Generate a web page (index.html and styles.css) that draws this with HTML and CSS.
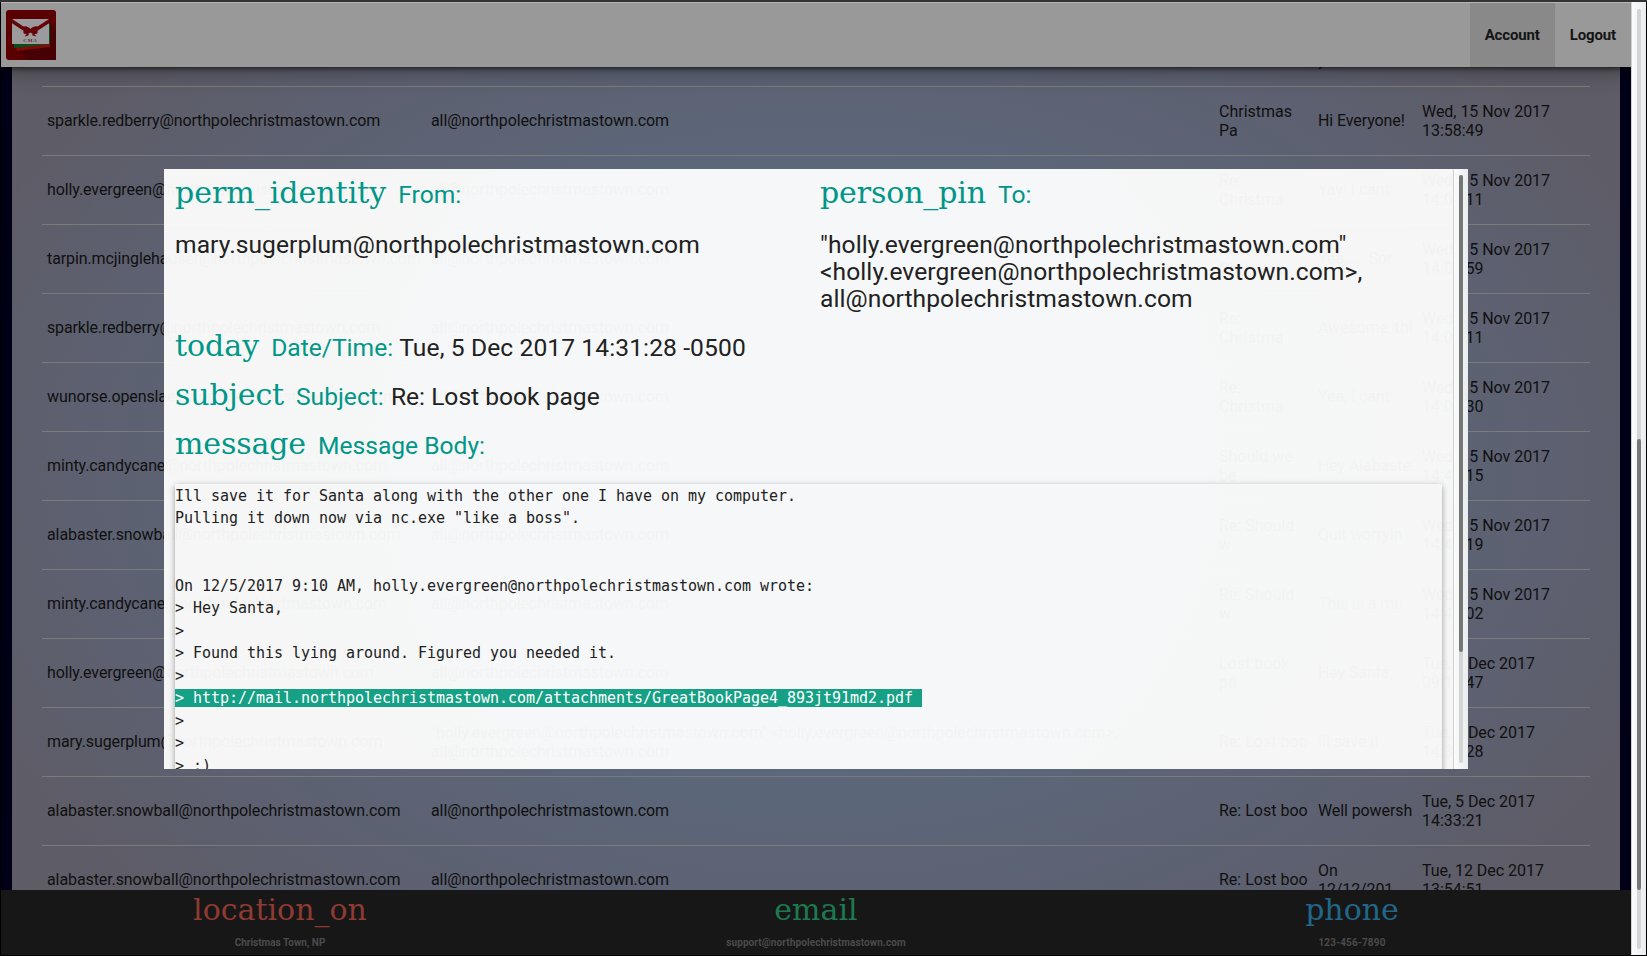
FILE: index.html
```html
<!DOCTYPE html>
<html lang="en">
<head>
<meta charset="utf-8">
<title>Mail</title>
<link rel="stylesheet" href="styles.css">
</head>
<body>
<div class="window">
  <div class="page">
    <header class="nav">
      <svg class="logo" width="50" height="50" viewBox="0 0 50 50">
        <defs><clipPath id="env"><path d="M6 9H43V34H6z"/></clipPath></defs>
        <rect width="50" height="50" rx="3" fill="#5a0003"/>
        <path d="M6 34L43 12L50 20V50H22z" fill="#470003"/>
        <path d="M8 33L44 31V37L11 41z" fill="#7d0c0a"/>
        <path d="M8 30L44 14V34L8 38z" fill="#07501c"/>
        <rect x="6" y="9" width="37" height="25" fill="#9b9a9c"/>
        <g clip-path="url(#env)"><path d="M5 10.500L18 19M44 10.500L31 19" stroke="#650408" stroke-width="3.400"/></g>
        <path d="M24.500 19C22 16 18 15.500 17 17L17.500 23C19 25 22 24 24.500 22.500C27 24 30 25 31.500 23L32 17C31 15.500 27 16 24.500 19zM23 21.500L18.500 26.500L22.500 25.500zM26 21.500L26.500 25.500L30.500 26.500z" fill="#650408"/>
        <text class="logo-text" x="24.500" y="31.500" text-anchor="middle">CMA</text>
      </svg>
      <nav class="links"><a class="link active">Account</a><a class="link">Logout</a></nav>
    </header>
    <main class="content">
      <div class="panel">
        <table class="mails">
          <colgroup><col class="c-from"><col class="c-to"><col class="c-subj"><col class="c-body"><col class="c-date"></colgroup>
          <tbody>
            <tr><td></td><td></td><td></td><td>Hi<br>you</td><td></td></tr>
            <tr><td class="tight">sparkle.redberry@northpolechristmastown.com</td><td>all@northpolechristmastown.com</td><td>Christmas Pa</td><td>Hi Everyone!</td><td>Wed, 15 Nov 2017 13:58:49</td></tr>
            <tr><td>holly.evergreen@northpolechristmastown.com</td><td>all@northpolechristmastown.com</td><td>Re:<br>Christma</td><td>Yay! I cant</td><td>Wed, 15 Nov 2017 14:00:11</td></tr>
            <tr><td>tarpin.mcjinglehauser@northpolechristmastown.com</td><td>all@northpolechristmastown.com</td><td>Re:<br>Christma</td><td>Yea..... Sor</td><td>Wed, 15 Nov 2017 14:00:59</td></tr>
            <tr><td class="tight">sparkle.redberry@northpolechristmastown.com</td><td>all@northpolechristmastown.com</td><td>Re:<br>Christma</td><td>Awesome, thi</td><td>Wed, 15 Nov 2017 14:02:11</td></tr>
            <tr><td>wunorse.openslae@northpolechristmastown.com</td><td>all@northpolechristmastown.com</td><td>Re:<br>Christma</td><td>Yea, I cant</td><td>Wed, 15 Nov 2017 14:04:30</td></tr>
            <tr><td>minty.candycane@northpolechristmastown.com</td><td>all@northpolechristmastown.com</td><td>Should we be</td><td>Hey Alabaste</td><td>Wed, 15 Nov 2017 14:45:15</td></tr>
            <tr><td>alabaster.snowball@northpolechristmastown.com</td><td>all@northpolechristmastown.com</td><td>Re: Should w</td><td>Quit worryin</td><td>Wed, 15 Nov 2017 14:48:19</td></tr>
            <tr><td>minty.candycane@northpolechristmastown.com</td><td>all@northpolechristmastown.com</td><td>Re: Should w</td><td>This is a mu</td><td>Wed, 15 Nov 2017 14:49:02</td></tr>
            <tr><td>holly.evergreen@northpolechristmastown.com</td><td>all@northpolechristmastown.com</td><td>Lost book pa</td><td>Hey Santa,</td><td>Tue, 5 Dec 2017 09:10:47</td></tr>
            <tr><td>mary.sugerplum@northpolechristmastown.com</td><td>"holly.evergreen@northpolechristmastown.com" &lt;holly.evergreen@northpolechristmastown.com&gt;, all@northpolechristmastown.com</td><td>Re: Lost boo</td><td>Ill save it</td><td>Tue, 5 Dec 2017 14:31:28</td></tr>
            <tr><td>alabaster.snowball@northpolechristmastown.com</td><td>all@northpolechristmastown.com</td><td>Re: Lost boo</td><td>Well powersh</td><td>Tue, 5 Dec 2017 14:33:21</td></tr>
            <tr><td>alabaster.snowball@northpolechristmastown.com</td><td>all@northpolechristmastown.com</td><td>Re: Lost boo</td><td>On<br>12/12/201</td><td>Tue, 12 Dec 2017 13:54:51</td></tr>
          </tbody>
        </table>
      </div>
    </main>
    <footer class="footer">
      <div class="contact red"><i class="glyph">location_on</i><span>Christmas Town, NP</span></div>
      <div class="contact green"><i class="glyph">email</i><span>support@northpolechristmastown.com</span></div>
      <div class="contact blue"><i class="glyph">phone</i><span>123-456-7890</span></div>
    </footer>
  </div>
  <div class="scroll"><div class="track"><div class="thumb page-thumb"></div></div></div>
</div>
<section class="modal">
  <div class="modal-body">
    <div class="people">
      <div><h5 class="label"><i class="glyph">perm_identity</i>From:</h5><h5 class="value">mary.sugerplum@northpolechristmastown.com</h5></div>
      <div><h5 class="label"><i class="glyph snug">person_pin</i>To:</h5><h5 class="value">"holly.evergreen@northpolechristmastown.com" &lt;holly.evergreen@northpolechristmastown.com&gt;, all@northpolechristmastown.com</h5></div>
    </div>
    <h5 class="label"><i class="glyph">today</i>Date/Time: <span class="dark wide">Tue, 5 Dec 2017 14:31:28 -0500</span></h5>
    <h5 class="label"><i class="glyph snug">subject</i>Subject: <span class="dark shift">Re: Lost book page</span></h5>
    <h5 class="label"><i class="glyph snug">message</i>Message Body:</h5>
    <pre class="message">Ill save it for Santa along with the other one I have on my computer.
Pulling it down now via nc.exe "like a boss".


On 12/5/2017 9:10 AM, holly.evergreen@northpolechristmastown.com wrote:
&gt; Hey Santa,
&gt;
&gt; Found this lying around. Figured you needed it.
&gt;
<mark class="selected">&gt; http://mail.northpolechristmastown.com/attachments/GreatBookPage4_893jt91md2.pdf </mark>
&gt;
&gt;
&gt; :)
</pre>
  </div>
  <div class="scroll modal-scroll"><div class="track"><div class="thumb modal-thumb"></div></div></div>
</section>
</body>
</html>
```
FILE: styles.css
```css
* { box-sizing: border-box; }
html, body { height: 100%; margin: 0; overflow: hidden; }
body { font-family: Roboto, sans-serif; font-size: 15px; color: #101010; background: #000; }
.window { height: 956px; padding: 0 1px 1px; border-top: 2px solid #333; display: flex; background: #000; }
.page { width: 1630px; display: flex; flex-direction: column; overflow: hidden; background: #000017; border-top: 1px solid #b4b4b4; }
.nav { height: 64px; flex: none; display: flex; justify-content: space-between; background: #999; position: relative; z-index: 1; box-shadow: 0 2px 4px rgba(0,0,0,.5), 0 4px 22px rgba(0,0,0,.35); }
.logo { margin: 7px 0 0 5px; }
.logo-text { font: bold 5px "Liberation Serif", serif; fill: #6a2830; letter-spacing: .8px; }
.links { display: flex; }
.link { padding: 0 15px; line-height: 64px; font-weight: 700; font-size: 15px; letter-spacing: -.14px; color: #141414; }
.active { background: #898989; }
.content { flex: 1; min-height: 0; overflow: hidden; padding: 0 11px; }
.panel { height: 823px; padding: 0 30px; display: flex; align-items: flex-start; background: radial-gradient(ellipse 58% 75% at 50% 50%, #5a6b80 0%, #5b687b 45%, #5d6070 80%, #5e5c66 100%, #5e5c62 130%); }
.mails { width: 1548px; flex: none; table-layout: fixed; border-collapse: collapse; margin-top: -50px; font-size: 16px; line-height: 19px; }
.c-from { width: 384px; } .c-to { width: 788px; } .c-subj { width: 99px; } .c-body { width: 104px; } .c-date { width: 173px; }
.mails td { height: 69px; padding: 0 5px; vertical-align: middle; border-bottom: 1px solid #7b7b7b; }
.mails td:nth-child(-n+2) { letter-spacing: -.1px; }
.mails td.tight { letter-spacing: -.147px; }
.mails td:nth-child(4) { white-space: nowrap; letter-spacing: -.1px; }
.mails td:nth-child(5) { padding-right: 35px; letter-spacing: -.04px; }
.footer { flex: none; height: 65px; display: grid; grid-template-columns: 558px 514px 558px; background: #171717; }
.contact { text-align: center; padding-top: 1px; font-size: 10px; font-weight: 700; color: #4b4b4b; }
.contact .glyph { display: block; line-height: 38px; margin-bottom: 8px; }
.contact span { display: block; line-height: 12px; }
.green span { letter-spacing: .09px; } .blue span { letter-spacing: .15px; }
.glyph { font-family: "DejaVu Serif", serif; font-style: normal; font-weight: 400; font-size: 30px; }
.red .glyph { color: #8f3a32; } .green .glyph { color: #1d7a50; } .blue .glyph { color: #20678a; }
.scroll { width: 15px; flex: none; padding: 7px 4px 6px 5px; background: linear-gradient(90deg, #d0d2d2 0 1px, #fbfcfc 1px, #e9eced); }
.track { height: 100%; width: 4px; margin-left: 1px; border-radius: 2px; background: #d3d4d4; }
.thumb { width: 4px; border-radius: 2px; background: #747776; }
.page-thumb { position: relative; top: 430px; height: 451px; }
.modal { position: absolute; left: 164px; top: 169px; width: 1304px; height: 600px; display: flex; overflow: hidden; background: radial-gradient(circle at 636px 281px, rgba(254,255,255,.95) 0, rgba(254,255,255,.95) 400px, rgba(254,254,253,.95) 430px); color: #212121; }
.modal-body { width: 1289px; padding: 0 11px; }
.modal-scroll { padding: 6px 4px 6px 5px; }
.modal-thumb { height: 477px; }
h5 { margin: 0; font-weight: 400; font-size: 24.6px; line-height: 27px; }
.people { display: grid; grid-template-columns: 645px 1fr; height: 152px; }
.label { color: #009688; height: 49px; line-height: 49px; }
.people .label { height: 48px; line-height: 47px; }
.label .glyph { margin-right: 12px; }
.label .snug { margin-right: 12px; letter-spacing: -.12px; }
.value { margin-top: 14px; width: 600px; letter-spacing: .075px; }
.dark { color: #212121; }
.wide { letter-spacing: .1px; }
.shift { margin-left: 1px; }
.message { margin: 16px 0 0; padding-top: .5px; height: 400px; font: 15px/22.5px "DejaVu Sans Mono", monospace; letter-spacing: -.03px; box-shadow: 0 2px 5px rgba(0,0,0,.28), 0 2px 8px rgba(0,0,0,.12); }
.selected { background: #16a085; color: #fff; }
```
